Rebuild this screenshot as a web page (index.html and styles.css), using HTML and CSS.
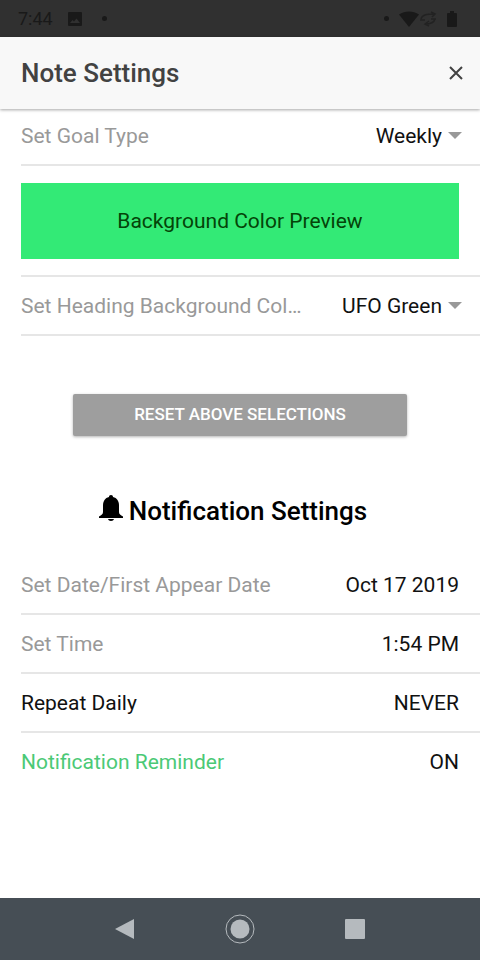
FILE: index.html
```html
<!DOCTYPE html>
<html lang="en">
<head>
<meta charset="utf-8">
<meta name="viewport" content="width=device-width, initial-scale=1">
<title>Note Settings</title>
<link rel="stylesheet" href="styles.css">
</head>
<body>
<div class="status">
  <span class="clock">7:44</span>
  <svg class="photo" viewBox="0 0 16 16" aria-hidden="true"><path fill-rule="evenodd" d="M2 1h12a1 1 0 0 1 1 1v12a1 1 0 0 1-1 1H2a1 1 0 0 1-1-1V2a1 1 0 0 1 1-1zm1 11h10L9.500 7.500 7 10.500 5.500 9z"/></svg>
  <span class="dot"></span>
  <span class="spacer"></span>
  <span class="dot"></span>
  <svg class="wifi" viewBox="0 0 20 16" aria-hidden="true"><path d="M0 3.500C6-.5 14-.5 20 3.500L10 16z"/></svg>
  <svg class="sync" viewBox="0 0 18 16" aria-hidden="true"><path d="M2 8C3 4 7 3 16 3M12 1l4 2-3 3M1 9h5M16 8c-1 4-5 5-10 5M10 10l-4 3 4 2M12 8h5" fill="none" stroke="currentColor" stroke-width="1.500"/></svg>
  <svg class="battery" viewBox="0 0 10 16" aria-hidden="true"><path d="M3 0h4v2h2a1 1 0 0 1 1 1v12a1 1 0 0 1-1 1H1a1 1 0 0 1-1-1V3a1 1 0 0 1 1-1h2z"/></svg>
</div>
<header class="toolbar">
  <h1>Note Settings</h1>
  <button class="close" type="button" aria-label="Close"><svg viewBox="0 0 14 14" aria-hidden="true"><path d="M1 1l12 12M13 1L1 13"/></svg></button>
</header>
<main>
  <div class="row row-select">
    <label for="goal">Set Goal Type</label>
    <select id="goal"><option>Daily</option><option selected>Weekly</option><option>Monthly</option></select>
    <svg class="caret" viewBox="0 0 14 7" aria-hidden="true"><path d="M0 0h14L7 7z"/></svg>
  </div>
  <div class="row row-preview">
    <div class="preview">Background Color Preview</div>
  </div>
  <div class="row row-select">
    <label for="color">Set Heading Background Color</label>
    <select id="color"><option selected>UFO Green</option><option>White</option></select>
    <svg class="caret" viewBox="0 0 14 7" aria-hidden="true"><path d="M0 0h14L7 7z"/></svg>
  </div>
  <button class="reset" type="button">RESET ABOVE SELECTIONS</button>
  <h2>
    <svg class="bell" viewBox="0 0 24 26" aria-hidden="true"><path d="M12 0c1.300 0 2 .8 2 2.100 4 .9 6 4.200 6 8.400v6.500c0 2.200 1.500 3.200 4 4.600V23H0v-1.400C2.500 20.200 4 19.200 4 17v-6.500c0-4.200 2-7.500 6-8.400C10 .8 10.700 0 12 0zM9 24h6c-.3 1.300-1.500 2-3 2s-2.700-.7-3-2z"/></svg>
    Notification Settings
  </h2>
  <div class="row">
    <label for="date">Set Date/First Appear Date</label>
    <button id="date" class="value" type="button">Oct 17 2019</button>
  </div>
  <div class="row">
    <label for="time">Set Time</label>
    <button id="time" class="value" type="button">1:54 PM</button>
  </div>
  <div class="row">
    <label class="strong" for="repeat">Repeat Daily</label>
    <button id="repeat" class="value" type="button">NEVER</button>
  </div>
  <div class="row row-last">
    <label class="active" for="reminder">Notification Reminder</label>
    <button id="reminder" class="value" type="button">ON</button>
  </div>
</main>
<nav class="navbar">
  <button type="button" aria-label="Back"><svg viewBox="0 0 32 32" aria-hidden="true"><path d="M6 16L25 6v20z"/></svg></button>
  <button type="button" aria-label="Home"><svg viewBox="0 0 32 32" aria-hidden="true"><circle cx="16" cy="16" r="9.500"/><circle class="ring" cx="16" cy="16" r="14"/></svg></button>
  <button type="button" aria-label="Recent apps"><svg viewBox="0 0 32 32" aria-hidden="true"><rect x="6" y="6" width="20" height="20" rx="1"/></svg></button>
</nav>
</body>
</html>
```
FILE: styles.css
```css
* {
  box-sizing: border-box;
}

body {
  margin: 0;
  min-height: 100vh;
  display: flex;
  flex-direction: column;
  background: #fff;
  color: #111;
  font-family: Roboto, sans-serif;
  font-size: 21px;
  line-height: 28px;
}

button,
select {
  margin: 0;
  padding: 0;
  border: 0;
  background: none;
  color: inherit;
  font: inherit;
}

.status {
  display: flex;
  align-items: center;
  height: 37px;
  padding: 0 23px 0 18px;
  background: #303030;
  color: #191919;
  font-size: 18px;
}

.status svg {
  height: 16px;
  fill: currentColor;
}

.photo {
  width: 18px;
  margin: 0 18px 0 13px;
}

.dot {
  width: 5px;
  height: 5px;
  border-radius: 50%;
  background: currentColor;
}

.spacer {
  flex: 1;
}

.wifi {
  width: 20px;
  margin-left: 10px;
}

.sync {
  width: 18px;
  color: #222;
}

.battery {
  width: 10px;
  margin-left: 10px;
}

.toolbar {
  position: relative;
  display: flex;
  align-items: center;
  justify-content: space-between;
  height: 72px;
  padding: 0 16px 0 21px;
  background: #f8f8f8;
  color: #424242;
  box-shadow: 0 1px 3px rgba(0, 0, 0, 0.35);
}

h1,
h2 {
  margin: 0;
  font-size: 26px;
  font-weight: 500;
  line-height: 32px;
}

.close {
  display: flex;
  padding: 1px;
}

.close svg {
  width: 14px;
  height: 14px;
  fill: none;
  stroke: #424242;
  stroke-width: 2;
}

main {
  flex: 1;
  display: flex;
  flex-direction: column;
  margin-top: -2px;
}

.row {
  display: flex;
  align-items: center;
  min-height: 59px;
  margin-left: 21px;
  padding-right: 21px;
  border-bottom: 2px solid #e6e6e6;
}

.row-select {
  padding-right: 18px;
}

.row-preview {
  padding-top: 17px;
  padding-bottom: 16px;
}

.row-last {
  border-bottom-color: transparent;
}

.row label {
  flex: 1;
  overflow: hidden;
  color: #999;
  text-overflow: ellipsis;
  white-space: nowrap;
}

.row .strong {
  color: #111;
}

.row .active {
  color: #4bc976;
}

.row select {
  width: 136px;
  appearance: none;
  text-align-last: right;
}

.caret {
  width: 14px;
  height: 7px;
  margin-left: 6px;
  fill: #999;
}

.preview {
  flex: 1;
  padding: 24px 16px;
  background: #33ea76;
  color: #044408;
  text-align: center;
}

.reset {
  align-self: center;
  width: calc(100% - 146px);
  margin-top: 58px;
  padding: 6px 16px 8px;
  border-radius: 2px;
  background: #9e9e9e;
  box-shadow: 0 1px 3px rgba(0, 0, 0, 0.3);
  color: #fff;
  font-size: 17px;
  font-weight: 500;
}

h2 {
  display: flex;
  align-items: center;
  justify-content: center;
  gap: 6px;
  margin: 59px 14px 29px 0;
  color: #000;
}

.bell {
  width: 24px;
  height: 26px;
  margin-bottom: 6px;
}

.navbar {
  display: flex;
  align-items: center;
  justify-content: center;
  gap: 83px;
  height: 62px;
  background: #464e55;
}

.navbar button {
  display: flex;
}

.navbar svg {
  width: 32px;
  height: 32px;
  fill: #b5babe;
}

.navbar .ring {
  fill: none;
  stroke: #b5babe;
  stroke-width: 1;
}
```
